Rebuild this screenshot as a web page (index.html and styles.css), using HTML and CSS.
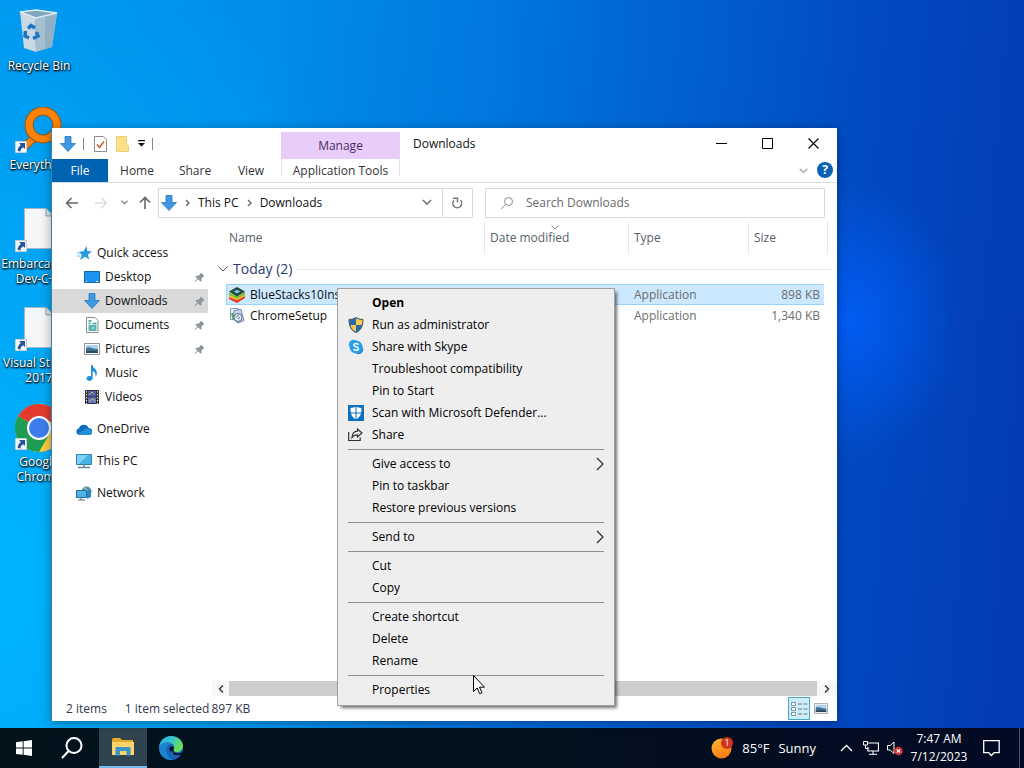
FILE: index.html
```html
<!DOCTYPE html>
<html lang="en">
<head>
    <meta charset="UTF-8">
    <meta name="viewport" content="width=device-width, initial-scale=1.0">
    <title>Downloads</title>
    <link rel="stylesheet" href="styles.css">
</head>
<body>
    <!-- Shared shapes -->
    <svg class="sprite" aria-hidden="true">
        <symbol id="arrow-down" viewBox="0 0 16 16">
            <path d="M5 0.5h6v7h4.5L8 15.5 0.5 7.5H5z" fill="#3f97e4" stroke="#2179c4" stroke-width="0.8"/>
        </symbol>
        <symbol id="pin" viewBox="0 0 12 12">
            <path d="M7.5 0.5l4 4-1.3 0.6-2 2 0 2.6-1.4 0.6L4.6 8 1.2 11 0.6 10.4 3.7 7.2 1.6 5.2 2.4 4h2.5l2-2z" fill="#8e959c"/>
        </symbol>
        <symbol id="shortcut" viewBox="0 0 12 12">
            <path d="M0 0h12v12H0z" fill="#f4f6f8" stroke="#9aa6b0"/>
            <path d="M4 2h6v6L8.3 6.3C6 7.500 5.500 8.500 5.500 10.500L2.800 10C2.500 7.500 3.800 5.500 5.900 4z" fill="#23559f"/>
        </symbol>
        <symbol id="picture" viewBox="0 0 16 12">
            <path d="M0.5 0.500h15v11H0.500z" fill="#fff" stroke="#8a949c"/>
            <path d="M2 2h12v8H2z" fill="#a9d3f2"/>
            <path d="M2 5c3-2 5 1 12 1v4H2z" fill="#46708c"/>
            <path d="M2 8.500c4-1 8-1 12 0V10H2z" fill="#274a63"/>
        </symbol>
        <symbol id="chevron-right" viewBox="0 0 8 14">
            <path d="M1 1l6 6-6 6" fill="none" stroke="#222" stroke-width="1.1"/>
        </symbol>
        <symbol id="chevron-down" viewBox="0 0 12 8">
            <path d="M1 1l5 5 5-5" fill="none" stroke="currentColor" stroke-width="2"/>
        </symbol>
        <symbol id="page" viewBox="0 0 32 44">
            <path d="M0.500 0.500h23l8 8v35H0.500z" fill="#f5f6f7" stroke="#a8b6c0"/>
            <path d="M23.500 0.500v8h8" fill="#dfe3e6" stroke="#8b97a0"/>
        </symbol>
    </svg>

    <main class="desktop">
        <ul class="desktop-icons">
            <li class="desktop-icon">
                <svg viewBox="0 0 48 48">
                    <path d="M5 4l15 5 1 35-12-4z" fill="#c9d8e2"/>
                    <path d="M20 9l22-4-5 34-16 5z" fill="#a3bfd0"/>
                    <path d="M30 8l12-3-5 34-7 2z" fill="#8fb1c5"/>
                    <path d="M5 4l16-2 21 3-21 5z" fill="#7ea7bf" stroke="#dce9f1" stroke-width="1.500"/>
                    <g fill="none" stroke="#1d74c4" stroke-width="3.500">
                        <path d="M13 20.500l3-3 4 2.500"/>
                        <path d="M10.500 23l-0.500 5 4 2"/>
                        <path d="M21.500 24l1.500 4-5 2.500"/>
                    </g>
                </svg>
                <span>Recycle Bin</span>
            </li>
            <li class="desktop-icon">
                <svg viewBox="0 0 48 48">
                    <path d="M7 42l15-14" stroke="#a3560c" stroke-width="8"/>
                    <path d="M7 42l15-14" stroke="#ff8306" stroke-width="6"/>
                    <circle cx="28" cy="18" r="14" fill="none" stroke="#8a5a20" stroke-width="9"/>
                    <circle cx="28" cy="18" r="14" fill="none" stroke="#ff8306" stroke-width="7"/>
                    <use href="#shortcut" x="0" y="34" width="12" height="12"/>
                </svg>
                <span>Everything</span>
            </li>
            <li class="desktop-icon">
                <svg viewBox="0 0 48 48">
                    <use href="#page" x="8" y="2" width="32" height="41"/>
                    <use href="#shortcut" x="0" y="34" width="12" height="12"/>
                </svg>
                <span>Embarcadero Dev-C++</span>
            </li>
            <li class="desktop-icon">
                <svg viewBox="0 0 48 48">
                    <use href="#page" x="8" y="2" width="32" height="41"/>
                    <use href="#shortcut" x="0" y="34" width="12" height="12"/>
                </svg>
                <span>Visual Studio 2017</span>
            </li>
            <li class="desktop-icon">
                <svg viewBox="0 0 48 48">
                    <circle cx="24" cy="24" r="24" fill="#ffcd40"/>
                    <path d="M24 24L3.200 12A24 24 0 0 0 24 48l10.400-18z" fill="#1f9d55"/>
                    <path d="M24 24L3.200 12A24 24 0 0 1 44.800 12z" fill="#e33b2e"/>
                    <circle cx="24" cy="24" r="12" fill="#fff"/>
                    <circle cx="24" cy="24" r="10" fill="#3b7ded"/>
                    <use href="#shortcut" x="0" y="34" width="12" height="12"/>
                </svg>
                <span>Google Chrome</span>
            </li>
        </ul>

        <section class="window">
            <header class="titlebar">
                <div class="quick-tools">
                    <svg width="16" height="16"><use href="#arrow-down"/></svg>
                    <i class="tool-divider"></i>
                    <svg class="tool-check" width="13" height="16" viewBox="0 0 13 16">
                        <path d="M0.500 0.500h9l3 3v12h-12z" fill="#fff" stroke="#8c8c8c"/>
                        <path d="M3 8.500l2.500 3L10 5.500" fill="none" stroke="#cf5b3c" stroke-width="1.600"/>
                    </svg>
                    <svg class="tool-folder" width="13" height="16" viewBox="0 0 13 16">
                        <path d="M0.500 0.500h10v9h2v6h-12z" fill="#fbe08a" stroke="#efcf6c"/>
                    </svg>
                    <svg class="tool-more" width="7" height="7" viewBox="0 0 7 7">
                        <path d="M0 0h7v1.200H0zM0 3h7L3.500 6.500z" fill="#111"/>
                    </svg>
                    <i class="tool-divider"></i>
                </div>
                <div class="manage">Manage</div>
                <h1>Downloads</h1>
                <div class="window-buttons">
                    <button aria-label="Minimize"><svg width="11" height="11"><path d="M0 5.500h11" stroke="#000"/></svg></button>
                    <button aria-label="Maximize"><svg width="11" height="11"><path d="M0.500 0.500h10v10h-10z" fill="none" stroke="#000"/></svg></button>
                    <button aria-label="Close"><svg width="11" height="11"><path d="M0.500 0.500l10 10M10.500 0.500l-10 10" stroke="#000" stroke-width="1.100"/></svg></button>
                </div>
            </header>

            <nav class="ribbon">
                <button class="tab tab-file">File</button>
                <button class="tab">Home</button>
                <button class="tab">Share</button>
                <button class="tab tab-view">View</button>
                <button class="tab tab-tools">Application Tools</button>
                <button class="ribbon-toggle" aria-label="Expand the ribbon"><svg width="9" height="6"><use href="#chevron-down"/></svg></button>
                <button class="help" aria-label="Help">?</button>
            </nav>

            <div class="navbar">
                <div class="history">
                    <button aria-label="Back"><svg width="13" height="12" viewBox="0 0 13 12"><path d="M13 6H1.500M6.500 1l-5 5 5 5" fill="none" stroke="#666" stroke-width="1.600"/></svg></button>
                    <button aria-label="Forward"><svg width="13" height="12" viewBox="0 0 13 12"><path d="M0 6h11.500M6.500 1l5 5-5 5" fill="none" stroke="#dcdcdc" stroke-width="1.400"/></svg></button>
                    <button class="recent" aria-label="Recent locations"><svg width="7" height="5"><use href="#chevron-down"/></svg></button>
                    <button class="up" aria-label="Up"><svg width="12" height="13" viewBox="0 0 12 13"><path d="M6 13V1.500M1 6.500l5-5 5 5" fill="none" stroke="#666" stroke-width="1.600"/></svg></button>
                </div>
                <div class="address">
                    <svg width="16" height="16"><use href="#arrow-down"/></svg>
                    <svg class="crumb-sep" width="5" height="8" viewBox="0 0 5 8"><path d="M1 1l3 3-3 3" fill="none" stroke="#666" stroke-width="1.400"/></svg>
                    <a href="#">This PC</a>
                    <svg class="crumb-sep" width="5" height="8" viewBox="0 0 5 8"><path d="M1 1l3 3-3 3" fill="none" stroke="#666" stroke-width="1.400"/></svg>
                    <a href="#">Downloads</a>
                    <button class="address-drop" aria-label="Previous locations"><svg width="10" height="7"><use href="#chevron-down"/></svg></button>
                    <button class="refresh" aria-label="Refresh"><svg width="12" height="12" viewBox="0 0 12 12"><path d="M9.500 3.300A4.400 4.400 0 1 1 3 3.300" fill="none" stroke="#777" stroke-width="1.500"/><path d="M2 1.200h4.500v4.300" fill="none" stroke="#777" stroke-width="1.500"/></svg></button>
                </div>
                <div class="search">
                    <svg width="14" height="14" viewBox="0 0 14 14"><circle cx="8.500" cy="5.500" r="4" fill="none" stroke="#888"/><path d="M5.500 8.500L1 13" stroke="#888"/></svg>
                    <input type="text" placeholder="Search Downloads" aria-label="Search Downloads">
                </div>
            </div>

            <div class="content">
                <ul class="sidebar">
                    <li><a href="#" class="place root">
                        <svg width="16" height="16" viewBox="0 0 16 16"><path d="M10.500 1l0.800 5 4.700 0.500-4 3 1.200 5-4.200-2.700L4 15l1.700-5L3 6.800l4.500-0.500z" fill="#2d9ae0"/><path d="M1 8h3M1 11h3" stroke="#6bbcf0"/></svg>
                        <span>Quick access</span></a></li>
                    <li><a href="#" class="place">
                        <svg width="16" height="12" viewBox="0 0 16 12"><path d="M0.500 0.500h15v11h-15z" fill="#1a94f0" stroke="#1266ad"/><path d="M2 10.500h1M12 10.500h2" stroke="#fff"/></svg>
                        <span>Desktop</span><svg class="pin" width="11" height="11"><use href="#pin"/></svg></a></li>
                    <li><a href="#" class="place active">
                        <svg width="16" height="16"><use href="#arrow-down"/></svg>
                        <span>Downloads</span><svg class="pin" width="11" height="11"><use href="#pin"/></svg></a></li>
                    <li><a href="#" class="place">
                        <svg width="16" height="16" viewBox="0 0 16 16"><path d="M2.500 0.500h8.500l3 3v12H2.500z" fill="#fff" stroke="#858d94"/><path d="M4.500 4h3M4.500 6.500h2M8.500 6.500h4M4.500 9h8M4.500 11h4M9.500 11h3M4.500 13h8" stroke="#2a9d95" stroke-width="1.300"/></svg>
                        <span>Documents</span><svg class="pin" width="11" height="11"><use href="#pin"/></svg></a></li>
                    <li><a href="#" class="place">
                        <svg width="16" height="12"><use href="#picture"/></svg>
                        <span>Pictures</span><svg class="pin" width="11" height="11"><use href="#pin"/></svg></a></li>
                    <li><a href="#" class="place">
                        <svg width="16" height="16" viewBox="0 0 16 16"><path d="M7 0h1.600c0.200 3.500 4.600 4 4.300 8.500-0.100 1.300-0.700 2.300-1.500 3 0.800-3.300-1-4.600-2.800-5.200v6.900c0 1.500-1.500 2.600-3.200 2.600S2.500 14.900 2.500 13.500s1.400-2.400 3-2.400c0.600 0 1.100 0.100 1.500 0.300z" fill="#1b8fdd"/></svg>
                        <span>Music</span></a></li>
                    <li><a href="#" class="place">
                        <svg width="16" height="16" viewBox="0 0 16 16"><path d="M1 1h14v14H1z" fill="#333"/><path d="M4 2h8v5.500H4z" fill="#4d5fae"/><path d="M4 8.500h8V14H4z" fill="#5b78c8"/><path d="M5 6l3-3 2 2M5 12.500l4-3 2 3" stroke="#e0b24a" fill="none"/><path d="M2.500 2v13M13.500 2v13" stroke="#f1f1f1" stroke-dasharray="1.500 1.500"/></svg>
                        <span>Videos</span></a></li>
                    <li class="spaced"><a href="#" class="place root">
                        <svg width="16" height="11" viewBox="0 0 16 11"><path d="M3.500 11a3.400 3.400 0 0 1-0.500-6.700A5 5 0 0 1 12.500 4 3.500 3.500 0 0 1 13 11z" fill="#0f6cbd"/><path d="M1.500 10l8-5c2-1.200 6.800 0.500 6.500 3.500-0.200 1.500-1.500 2.500-3 2.500H3.500z" fill="#2391d8"/></svg>
                        <span>OneDrive</span></a></li>
                    <li class="spaced"><a href="#" class="place root">
                        <svg width="16" height="15" viewBox="0 0 16 15"><path d="M0.500 0.500h15v10h-15z" fill="#45b2e6" stroke="#2c84ad"/><path d="M1 1h11L3 10H1z" fill="#7ed0f5"/><path d="M8 11v2M2 13.500h12" stroke="#65879b" stroke-width="1.500"/></svg>
                        <span>This PC</span></a></li>
                    <li class="spaced"><a href="#" class="place root">
                        <svg width="16" height="15" viewBox="0 0 16 15"><circle cx="10.500" cy="5.500" r="5" fill="#5d8ea8"/><path d="M8 2c3 1 4 4 3 8" stroke="#b6dcea" fill="none"/><path d="M0.500 4.500h10v7h-10z" fill="#4fb3e8" stroke="#236f9e"/><path d="M5 12v2M2 14h7" stroke="#4c7286"/><path d="M11 5l4-2v8l-4 2z" fill="#2f89be"/></svg>
                        <span>Network</span></a></li>
                </ul>

                <div class="files">
                    <table>
                        <colgroup>
                            <col class="col-edge">
                            <col>
                            <col class="col-date">
                            <col class="col-type">
                            <col class="col-size">
                            <col class="col-end">
                        </colgroup>
                        <thead>
                            <tr>
                                <th></th>
                                <th>Name</th>
                                <th class="split sorted">Date modified<svg class="sort-mark" width="8" height="5"><path d="M0.500 0.500l3.500 3.500 3.500-3.500" fill="none" stroke="#888"/></svg></th>
                                <th class="split">Type</th>
                                <th class="split">Size</th>
                                <th class="last"></th>
                            </tr>
                        </thead>
                        <tbody>
                            <tr class="group">
                                <td colspan="6"><div class="group-title"><svg width="10" height="6"><path d="M0.500 0.500l4.500 4.500 4.500-4.500" fill="none" stroke="#555"/></svg><span>Today (2)</span></div></td>
                            </tr>
                            <tr class="selected">
                                <td></td>
                                <td class="file"><div class="file-name">
                                    <svg width="16" height="16" viewBox="0 0 16 16"><path d="M0 10l8 3 8-4v2l-8 5-8-4z" fill="#e8352f"/><path d="M0 8l8 3.500L16 7v2l-8 4.500L0 10z" fill="#f9b417"/><path d="M0 5.500l8 4L16 5v2.500l-8 4-8-3.500z" fill="#72bf32"/><path d="M0 4.500L8 0l8 4.500-8 5z" fill="#24453a"/><path d="M4.500 4.500L8 2.800l3.500 1.700L8 6.500z" fill="#74cde0"/></svg>
                                    <span>BlueStacks10Installer</span></div></td>
                                <td></td>
                                <td>Application</td>
                                <td class="size">898 KB</td>
                                <td></td>
                            </tr>
                            <tr>
                                <td></td>
                                <td class="file"><div class="file-name">
                                    <svg width="16" height="16" viewBox="0 0 16 16"><path d="M1.500 0.500h8v11h-8z" fill="#eef4fb" stroke="#8398b8"/><path d="M5 2.500l7-1 3 11-6 2.500-5-4z" fill="#c3d5ea" stroke="#7089ad"/><circle cx="9" cy="9.500" r="4" fill="#dce7f3" stroke="#5b6f92"/><path d="M7 9.500l3-3M9 11l2-2" stroke="#4a6ba5"/><path d="M3 5l1.500 6" stroke="#58a84c" stroke-width="2"/></svg>
                                    <span>ChromeSetup</span></div></td>
                                <td></td>
                                <td>Application</td>
                                <td class="size">1,340 KB</td>
                                <td></td>
                            </tr>
                        </tbody>
                    </table>
                    <div class="scrollbar">
                        <button aria-label="Scroll left"><svg width="6" height="8"><path d="M5 0.500L1.500 4 5 7.500" fill="none" stroke="#444" stroke-width="1.600"/></svg></button>
                        <div class="thumb"></div>
                        <button aria-label="Scroll right"><svg width="6" height="8"><path d="M1 0.500L4.500 4 1 7.500" fill="none" stroke="#444" stroke-width="1.600"/></svg></button>
                    </div>
                </div>
            </div>

            <footer class="statusbar">
                <span class="count">2 items</span>
                <span class="picked">1 item selected</span>
                <span>897 KB</span>
                <div class="view-modes">
                    <button class="on" aria-label="Details"><svg width="17" height="14" viewBox="0 0 17 14"><path d="M0.500 0.500h4v3h-4zM0.500 5.500h4v3h-4zM0.500 10.500h4v3h-4z" fill="#fff" stroke="#7898a8"/><path d="M7 2h4M12.500 2h4M7 7h4M12.500 7h4M7 12h4M12.500 12h4" stroke="#777"/></svg></button>
                    <button aria-label="Large icons"><svg width="14" height="11"><use href="#picture"/></svg></button>
                </div>
            </footer>
        </section>

        <div class="context-menu">
            <button class="default"><i></i>Open</button>
            <button><i><svg width="16" height="16" viewBox="0 0 16 16"><path d="M8 0.500c2 1.300 4.500 2 7 2C15 9 13 13.500 8 15.500 3 13.500 1 9 1 2.500c2.500 0 5-0.700 7-2z" fill="#2b6aa8" stroke="#4b5866"/><path d="M8 1.200c2 1.100 4 1.700 6.400 1.800-0.100 2-0.300 3.600-0.900 5H8zM2.500 8H8v6.800C5 13.300 3.200 11.200 2.500 8z" fill="#fdc850"/></svg></i>Run as administrator</button>
            <button><i><svg width="16" height="16" viewBox="0 0 16 16"><circle cx="5.500" cy="5.500" r="4.700" fill="#31a5e8"/><circle cx="10.500" cy="10.500" r="4.700" fill="#1c87d8"/><circle cx="8" cy="8" r="6.500" fill="#2b9fe6"/><path d="M10.400 5.700C9.800 4.200 5.800 4 5.900 6.100c0.100 2 4.600 1.400 4.500 3.600-0.100 2.200-4.400 1.900-4.800 0.200" fill="none" stroke="#fff" stroke-width="1.500"/></svg></i>Share with Skype</button>
            <button><i></i>Troubleshoot compatibility</button>
            <button><i></i>Pin to Start</button>
            <button><i><svg width="16" height="16" viewBox="0 0 16 16"><path d="M0 0h16v16H0z" fill="#0f70bd"/><path d="M8 1.500c1.800 1 3.500 1.400 5.500 1.500 0 5.500-1 9-5.500 11.500C3.500 12 2.500 8.500 2.500 3 4.500 2.900 6.200 2.500 8 1.500z" fill="#fff"/><path d="M8 1v14M2 8h12" stroke="#0f70bd"/></svg></i>Scan with Microsoft Defender...</button>
            <button><i><svg width="16" height="16" viewBox="0 0 16 16"><path d="M0.700 5v8.500h11.500v-3" fill="none" stroke="#333" stroke-width="1.200"/><path d="M9.500 2l4.500 4-4.500 4V7.800C7 7.800 5.300 8.500 4 10.500 4.200 6.500 6 4.400 9.500 4.200z" fill="none" stroke="#333" stroke-width="1.200"/></svg></i>Share</button>
            <hr>
            <button><i></i>Give access to<svg class="more" width="8" height="14"><use href="#chevron-right"/></svg></button>
            <button><i></i>Pin to taskbar</button>
            <button><i></i>Restore previous versions</button>
            <hr>
            <button><i></i>Send to<svg class="more" width="8" height="14"><use href="#chevron-right"/></svg></button>
            <hr>
            <button><i></i>Cut</button>
            <button><i></i>Copy</button>
            <hr>
            <button><i></i>Create shortcut</button>
            <button><i></i>Delete</button>
            <button><i></i>Rename</button>
            <hr>
            <button><i></i>Properties</button>
        </div>

        <svg class="cursor" width="12" height="20" viewBox="0 0 12 20"><path d="M0.500 0.500v16l3.700-3.500 2.500 5.700 2.300-1-2.500-5.500h5z" fill="#fff" stroke="#000"/></svg>
    </main>

    <footer class="taskbar">
        <button class="task" aria-label="Start"><svg width="16" height="16" viewBox="0 0 16 16"><path d="M0 2.200l6.700-0.900v6.300H0zM7.600 1.200L16 0v7.600H7.600zM0 8.500h6.700v6.300L0 13.900zM7.600 8.500H16V16l-8.400-1.200z" fill="#fff"/></svg></button>
        <button class="task" aria-label="Search"><svg width="22" height="22" viewBox="0 0 22 22"><circle cx="13" cy="8.500" r="7.500" fill="none" stroke="#fff" stroke-width="2"/><path d="M7.700 14L1 21" stroke="#fff" stroke-width="2.200"/></svg></button>
        <button class="task running" aria-label="File Explorer"><svg width="22" height="20" viewBox="0 0 22 20"><path d="M0 2.500L1 1h7l2 2h11v4H0z" fill="#e9a92c"/><path d="M0 5h22v13H0z" fill="#fcd46a"/><path d="M3.500 10h15v8.500h-4V14H8v4.500H3.500z" fill="#3e93c9"/><path d="M9 14h4.500v4H9z" fill="#fcd46a"/></svg></button>
        <button class="task" aria-label="Microsoft Edge"><svg width="24" height="24" viewBox="0 0 24 24">
            <defs>
                <linearGradient id="edge-top" x1="0" y1="0" x2="1" y2="0.400"><stop offset="0" stop-color="#28a9e4"/><stop offset="0.500" stop-color="#32c3d4"/><stop offset="1" stop-color="#6cdf54"/></linearGradient>
            </defs>
            <circle cx="12" cy="12" r="12" fill="#1763b6"/>
            <path d="M0 11.500C0.500 5 5.500 0 12 0c6.800 0 12 4.800 12 10 0 4-3 6-6 6-2.600 0-4.300-1-3.500-2.500C17 10 13 6.500 9 6.500c-4.500 0-8 2-9 5z" fill="url(#edge-top)"/>
            <path d="M0 11.500C1 8 5 6.500 9 6.500c1.500 0 3 0.500 4 1.300-4 0.200-6.500 3.700-5.500 8.200 0.800 4 3.500 7 6.500 7.700C6 25 0 19 0 11.500z" fill="#1b82d4"/>
            <path d="M24 15.500c-2 2-8 3.500-10.500-1.500L15 19h8z" fill="#03111c"/>
            <path d="M10.500 12c1-2 4.500-1.800 4.500 0.300 0 0.700-1.100 1.300-0.300 2.500-2.500 2-5.200-0.300-4.200-2.800z" fill="#03111c"/>
        </svg></button>

        <div class="tray">
            <button class="weather">
                <svg width="22" height="22" viewBox="0 0 22 22">
                    <defs><linearGradient id="sun" x1="0.200" y1="0" x2="0.600" y2="1"><stop offset="0" stop-color="#ffb530"/><stop offset="1" stop-color="#f47c13"/></linearGradient></defs>
                    <circle cx="10.500" cy="11.500" r="10" fill="url(#sun)"/>
                    <circle cx="16" cy="6" r="6" fill="#d3341f"/>
                    <text x="16" y="9" class="badge-text">1</text>
                </svg>
                <span>85°F</span><span>Sunny</span>
            </button>
            <button class="tray-up" aria-label="Show hidden icons"><svg width="13" height="8" viewBox="0 0 13 8"><path d="M1 7l5.500-5.500L12 7" fill="none" stroke="#fff" stroke-width="1.300"/></svg></button>
            <button class="tray-net" aria-label="Network"><svg width="16" height="14" viewBox="0 0 16 14"><path d="M5 2h10.500v8H5V6" fill="none" stroke="#fff" stroke-width="1.200"/><path d="M0.500 0.500h4v3.500h-4zM2.500 4v3.500h2.500M10 10v3M6 13.300h8" fill="none" stroke="#fff"/></svg></button>
            <button class="tray-sound" aria-label="Volume muted"><svg width="16" height="16" viewBox="0 0 16 16"><path d="M0.500 5.500h2.700L7 2v11.500L3.200 10H0.500z" fill="none" stroke="#fff"/><circle cx="11.500" cy="11" r="4.300" fill="#d12f35"/><path d="M9.800 9.300l3.400 3.400M13.200 9.300l-3.400 3.400" stroke="#fff" stroke-width="1.200"/></svg></button>
            <button class="clock"><span>7:47 AM</span><span>7/12/2023</span></button>
            <button class="notes" aria-label="Notifications"><svg width="17" height="17" viewBox="0 0 17 17"><path d="M0.700 0.700h15.500v12h-5.200L8.300 15.500 5.800 12.700H0.700z" fill="none" stroke="#fff" stroke-width="1.300"/></svg></button>
            <i class="show-desktop"></i>
        </div>
    </footer>
</body>
</html>
```
FILE: styles.css
```css
* {
    box-sizing: border-box;
}

body {
    margin: 0;
    min-height: 100vh;
    display: flex;
    flex-direction: column;
    overflow: hidden;
    font-family: 'Open Sans', 'Noto Sans', sans-serif;
    font-size: 12px;
    line-height: 16px;
    color: #111;
}

button {
    border: none;
    background: none;
    padding: 0;
    font: inherit;
    color: inherit;
    display: flex;
    align-items: center;
    justify-content: center;
}

a {
    color: inherit;
    text-decoration: none;
}

ul {
    list-style: none;
    margin: 0;
    padding: 0;
}

svg {
    flex-shrink: 0;
}

.sprite {
    position: absolute;
    width: 0;
    height: 0;
}

/* Desktop */
.desktop {
    flex: 1;
    position: relative;
    background:
        radial-gradient(ellipse 110px 140px at 83% 44%, rgba(0, 96, 250, 0.85), rgba(0, 85, 230, 0) 100%),
        radial-gradient(ellipse 420px 700px at 0% 80%, rgba(0, 184, 255, 0.9), rgba(0, 170, 255, 0) 100%),
        linear-gradient(95deg, #0094ee 0%, #008eea 25%, #0078df 45%, #0062d2 62%, #024ac2 80%, #023ab4 100%);
}

.desktop-icons {
    padding: 8px 0 0 1px;
}

.desktop-icon {
    width: 76px;
    height: 99px;
    display: flex;
    flex-direction: column;
    align-items: center;
    gap: 2px;
    color: #fff;
    line-height: 15px;
    text-align: center;
    text-shadow: 1px 1px 2px #000, 0 1px 2px #000;
}

.desktop-icon svg {
    width: 48px;
    height: 48px;
}

/* Explorer window */
.window {
    position: absolute;
    left: 51px;
    right: 187px;
    top: 128px;
    bottom: 7px;
    display: flex;
    flex-direction: column;
    background-color: #fff;
    border-left: 1px solid #3a7fae;
    box-shadow: 0 2px 10px rgba(0, 0, 0, 0.35);
}

.titlebar {
    display: flex;
    height: 31px;
}

.quick-tools {
    width: 229px;
    padding-left: 8px;
    display: flex;
    align-items: center;
    gap: 7px;
}

.tool-divider {
    width: 1px;
    height: 12px;
    background-color: #888;
}

.tool-check {
    margin-left: 3px;
}

.tool-folder,
.tool-more {
    margin-left: 2px;
}

.manage {
    width: 119px;
    margin-top: 4px;
    padding-top: 6px;
    text-align: center;
    color: #4b2c62;
    background-color: #e8ccfa;
}

.titlebar h1 {
    flex: 1;
    margin: 0;
    padding-left: 13px;
    font-size: 12px;
    font-weight: normal;
    line-height: 32px;
}

.window-buttons {
    display: flex;
    padding-right: 1px;
}

.window-buttons button {
    width: 46px;
}

.ribbon {
    display: flex;
    height: 24px;
    border-bottom: 1px solid #dcdcdc;
}

.tab {
    width: 58px;
    color: #333;
}

.tab-file {
    width: 56px;
    color: #fff;
    background-color: #0063b1;
}

.tab-view {
    width: 54px;
}

.tab-tools {
    width: 119px;
    height: 17px;
    margin-left: 3px;
    padding-top: 7px;
    border: solid #e6dcec;
    border-width: 0 1px;
}

.ribbon-toggle {
    width: 24px;
    margin-left: auto;
    color: #aaa;
}

.help {
    width: 16px;
    height: 16px;
    margin: 3px 4px 0 2px;
    border-radius: 50%;
    background-color: #0b63b5;
    color: #fff;
    font-weight: bold;
}

.navbar {
    display: flex;
    align-items: center;
    height: 39px;
    padding-right: 12px;
}

.history {
    display: flex;
    width: 106px;
    padding-left: 4px;
    color: #777;
}

.history button {
    width: 30px;
    height: 24px;
}

.history .recent {
    width: 17px;
}

.history .up {
    width: 24px;
}

.address {
    flex: 1;
    height: 30px;
    margin-right: 12px;
    display: flex;
    align-items: center;
    padding-left: 2px;
    border: 1px solid #d9d9d9;
}

.crumb-sep {
    margin: 0 8px;
}

.address-drop {
    width: 30px;
    height: 28px;
    margin-left: auto;
    color: #777;
}

.refresh {
    width: 30px;
    height: 28px;
    border-left: 1px solid #d9d9d9;
}

.search {
    width: 44%;
    height: 30px;
    display: flex;
    align-items: center;
    gap: 12px;
    padding-left: 14px;
    border: 1px solid #d9d9d9;
}

.search input {
    flex: 1;
    min-width: 0;
    padding: 0;
    border: none;
    outline: none;
    background: none;
    font: inherit;
}

.search input::placeholder {
    color: #6a6a6a;
}

.content {
    flex: 1;
    display: flex;
    min-height: 0;
}

/* Folder list */
.sidebar {
    width: 160px;
    padding: 19px 4px 0 0;
}

.spaced {
    margin-top: 8px;
}

.place {
    display: flex;
    align-items: center;
    gap: 5px;
    height: 24px;
    padding: 0 3px 0 32px;
}

.place.root {
    padding-left: 24px;
}

.place.active {
    background-color: #d9d9d9;
}

.place .pin {
    margin-left: auto;
}

/* File list */
.files {
    flex: 1;
    min-width: 0;
    display: flex;
    flex-direction: column;
    justify-content: space-between;
}

table {
    width: 100%;
    table-layout: fixed;
    border-spacing: 0;
    padding: 0 9px 0 4px;
}

.col-edge {
    width: 10px;
}

.col-date {
    width: 144px;
}

.col-type {
    width: 120px;
}

.col-size {
    width: 76px;
}

.col-end {
    width: 4px;
}

th, td {
    padding: 0;
    text-align: left;
    font-weight: normal;
    color: #6d6d6d;
    white-space: nowrap;
}

th {
    position: relative;
    height: 32px;
    padding-left: 3px;
    color: #56616c;
}

th.split {
    padding-left: 5px;
    border-left: 1px solid #e8e8e8;
}

th.last {
    border-right: 1px solid #e8e8e8;
}

.sort-mark {
    position: absolute;
    top: 3px;
    left: 46%;
}

.group td {
    height: 30px;
    color: #2b3c70;
    font-size: 14px;
}

.group-title {
    display: flex;
    align-items: center;
    gap: 5px;
    margin-right: -3px;
    padding-left: 2px;
}

.group-title::after {
    content: "";
    flex: 1;
    height: 1px;
    background-color: #e2e8f0;
}

tbody td {
    height: 21px;
    padding-left: 6px;
}

.group td,
tbody td:first-child,
tbody td:last-child {
    padding-left: 0;
}

tbody td.file {
    padding-left: 3px;
    color: #111;
}

.file-name {
    display: flex;
    align-items: center;
    gap: 5px;
}

td.size {
    padding-right: 4px;
    text-align: right;
}

.selected td:not(:first-child):not(:last-child) {
    background-color: #cce8ff;
    border: solid #99d1ff;
    border-width: 1px 0;
}

.selected td.file {
    box-shadow: inset 1px 0 #99d1ff;
}

.scrollbar {
    display: flex;
    height: 15px;
    background-color: #f7f7f7;
}

.scrollbar button {
    width: 17px;
}

.scrollbar button:last-child {
    width: 20px;
}

.thumb {
    flex: 1;
    background-color: #cdcdcd;
}

.statusbar {
    display: flex;
    align-items: center;
    height: 25px;
    padding-left: 14px;
    color: #2e3850;
}

.count {
    margin-right: 18px;
}

.picked {
    margin-right: 2px;
}

.view-modes {
    display: flex;
    margin-left: auto;
    margin-right: 5px;
}

.view-modes button {
    width: 22px;
    height: 23px;
}

.view-modes .on {
    background-color: #cdeef9;
    border: 1px solid #4aa7c8;
}

/* Context menu */
.context-menu {
    position: absolute;
    left: 337px;
    top: 288px;
    width: 278px;
    padding: 3px 10px 4px 10px;
    background-color: #eee;
    border: 1px solid #a0a0a0;
    box-shadow: 3px 3px 3px -1px rgba(0, 0, 0, 0.55);
}

.context-menu button {
    width: 100%;
    height: 22px;
    justify-content: flex-start;
    color: #000;
}

.context-menu i {
    display: flex;
    width: 24px;
    height: 16px;
}

.context-menu .default {
    font-weight: bold;
}

.context-menu hr {
    height: 1px;
    margin: 3px 0;
    border: none;
    background-color: #919191;
}

.more {
    margin-left: auto;
}

.cursor {
    position: absolute;
    left: 473px;
    top: 675px;
}

/* Taskbar */
.taskbar {
    display: flex;
    height: 40px;
    color: #fff;
    background: linear-gradient(90deg, #02131c 0%, #03111e 50%, #030a24 100%);
}

.task {
    width: 48px;
    height: 40px;
}

.task:nth-child(2) {
    margin-right: 3px;
}

.running {
    background-color: #2f444f;
    border-bottom: 2px solid #76b9ed;
}

.tray {
    display: flex;
    align-items: center;
    margin-left: auto;
}

.weather {
    gap: 9px;
    margin-right: 24px;
    font-size: 13px;
}

.badge-text {
    font-size: 9px;
    fill: #fff;
    text-anchor: middle;
}

.tray-up {
    margin-right: 10px;
}

.tray-net {
    margin-right: 8px;
}

.clock {
    width: 72px;
    flex-direction: column;
    line-height: 18px;
}

.notes {
    width: 32px;
    margin-right: 12px;
}

.show-desktop {
    width: 5px;
    height: 40px;
    border-left: 1px solid #4a5164;
}
```
